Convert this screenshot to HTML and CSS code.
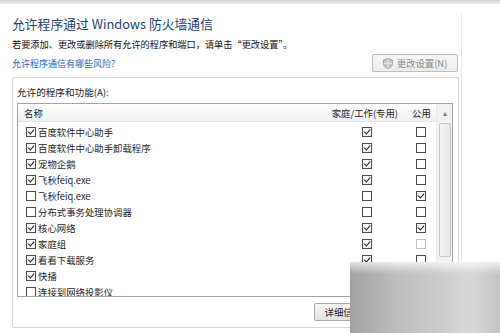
FILE: index.html
```html
<!DOCTYPE html>
<html lang="zh-CN">
<head>
    <meta charset="UTF-8">
    <title>允许程序通过 Windows 防火墙通信</title>
    <link rel="stylesheet" href="styles.css">
</head>
<body>
    <div class="topbar"></div>
    <div class="page">
        <h1 class="title">允许程序通过 Windows 防火墙通信</h1>
        <p class="desc">若要添加、更改或删除所有允许的程序和端口，请单击“更改设置”。</p>
        <div class="link-row">
            <a class="link" href="#">允许程序通信有哪些风险?</a>
            <button class="btn btn-change" disabled>
                <svg class="shield" width="10" height="11" viewBox="0 0 10 11">
                    <path d="M5 0.5 L9.5 2 V5.5 C9.5 8 7.5 9.8 5 10.5 C2.5 9.8 0.5 8 0.5 5.5 V2 Z" fill="#c4c4c4" stroke="#9a9a9a" stroke-width="0.8"/>
                    <path d="M5 0.9 V10.1 M0.9 5.2 H9.1" stroke="#ededed" stroke-width="1"/>
                </svg>
                更改设置(N)
            </button>
        </div>

        <!-- 允许的程序列表 -->
        <div class="group">
            <div class="group-label">允许的程序和功能(A):</div>
            <div class="list">
                <div class="list-body">
                    <div class="row head">
                        <span class="c-name">名称</span>
                        <span class="c-home">家庭/工作(专用)</span>
                        <span class="c-pub">公用</span>
                    </div>
                    <div class="row">
                        <span class="c-name"><i class="cb on"></i>百度软件中心助手</span>
                        <span class="c-home"><i class="cb on"></i></span>
                        <span class="c-pub"><i class="cb"></i></span>
                    </div>
                    <div class="row">
                        <span class="c-name"><i class="cb on"></i>百度软件中心助手卸载程序</span>
                        <span class="c-home"><i class="cb on"></i></span>
                        <span class="c-pub"><i class="cb"></i></span>
                    </div>
                    <div class="row">
                        <span class="c-name"><i class="cb on"></i>宠物企鹅</span>
                        <span class="c-home"><i class="cb on"></i></span>
                        <span class="c-pub"><i class="cb"></i></span>
                    </div>
                    <div class="row">
                        <span class="c-name"><i class="cb on"></i>飞秋feiq.exe</span>
                        <span class="c-home"><i class="cb on"></i></span>
                        <span class="c-pub"><i class="cb"></i></span>
                    </div>
                    <div class="row">
                        <span class="c-name"><i class="cb"></i>飞秋feiq.exe</span>
                        <span class="c-home"><i class="cb"></i></span>
                        <span class="c-pub"><i class="cb on"></i></span>
                    </div>
                    <div class="row">
                        <span class="c-name"><i class="cb"></i>分布式事务处理协调器</span>
                        <span class="c-home"><i class="cb"></i></span>
                        <span class="c-pub"><i class="cb"></i></span>
                    </div>
                    <div class="row">
                        <span class="c-name"><i class="cb on"></i>核心网络</span>
                        <span class="c-home"><i class="cb on"></i></span>
                        <span class="c-pub"><i class="cb on"></i></span>
                    </div>
                    <div class="row">
                        <span class="c-name"><i class="cb on"></i>家庭组</span>
                        <span class="c-home"><i class="cb on"></i></span>
                        <span class="c-pub"><i class="cb off"></i></span>
                    </div>
                    <div class="row">
                        <span class="c-name"><i class="cb on"></i>看看下载服务</span>
                        <span class="c-home"><i class="cb on"></i></span>
                        <span class="c-pub"><i class="cb"></i></span>
                    </div>
                    <div class="row">
                        <span class="c-name"><i class="cb on"></i>快播</span>
                        <span class="c-home"><i class="cb on"></i></span>
                        <span class="c-pub"><i class="cb on"></i></span>
                    </div>
                    <div class="row">
                        <span class="c-name"><i class="cb"></i>连接到网络投影仪</span>
                        <span class="c-home"><i class="cb"></i></span>
                        <span class="c-pub"><i class="cb"></i></span>
                    </div>
                </div>
                <div class="scrollbar">
                    <div class="sb-arrow">&#9652;</div>
                    <div class="sb-thumb"></div>
                </div>
            </div>
            <div class="group-foot">
                <button class="btn">详细信息(L)...</button>
                <button class="btn">删除(M)</button>
            </div>
        </div>
    </div>
    <div class="watermark"></div>
</body>
</html>
```

FILE: styles.css
```css
body {
    margin: 0;
    background: #ffffff;
    font-family: "Noto Sans CJK SC", "Liberation Sans", sans-serif;
    color: #222;
    overflow: hidden;
}
.topbar {
    height: 4px;
    background: linear-gradient(#d4d4d4, #ececec);
}
.page {
    width: 449px;
    height: 329px;
    padding-left: 12px;
    border-right: 1px solid #e6e6e6;
}
.title {
    margin: 10px 0 0;
    font-size: 12.8px;
    font-weight: normal;
    line-height: 20px;
    color: #243f72;
}
.desc {
    margin: 2px 0 0;
    font-size: 9.2px;
    line-height: 16px;
    color: #111;
}
.link-row {
    display: flex;
    justify-content: space-between;
    align-items: center;
    margin-top: 2px;
    height: 18px;
    padding-right: 3px;
}
.link {
    font-size: 9px;
    color: #1a66c8;
    text-decoration: none;
}
.btn {
    display: flex;
    align-items: center;
    justify-content: center;
    gap: 4px;
    height: 18px;
    padding: 0 8px;
    font-family: inherit;
    font-size: 9.4px;
    color: #222;
    background: linear-gradient(#f6f6f6, #e3e3e3);
    border: 1px solid #a9a9a9;
    border-radius: 2px;
}
.btn-change {
    width: 86px;
    color: #8a8a8a;
    border-color: #bdbdbd;
    background: linear-gradient(#f7f7f7, #ececec);
}
.group {
    margin-top: 5px;
    width: 436px;
    border: 1px solid #d3d8dc;
    border-radius: 2px;
    padding: 0 5px 6px 4px;
}
.group-label {
    margin-top: 8px;
    font-size: 9.6px;
    line-height: 12px;
    color: #222;
}
.list {
    display: flex;
    margin-top: 5px;
    height: 192px;
    border: 1px solid #9ea3a9;
    overflow: hidden;
}
.list-body {
    flex: 1;
    overflow: hidden;
}
.row {
    display: flex;
    align-items: center;
    height: 16px;
    font-size: 9.4px;
    line-height: 16px;
    white-space: nowrap;
    color: #1e1e1e;
}
.row.head {
    height: 18px;
    margin-bottom: 2px;
    background: linear-gradient(#ffffff, #eef0f2);
    border-bottom: 1px solid #e2e4e6;
    box-sizing: border-box;
}
.c-name {
    display: flex;
    align-items: center;
    flex: 1;
    padding-left: 8px;
}
.head .c-name {
    padding-left: 6px;
}
/* checkbox columns */
.c-home {
    display: flex;
    justify-content: center;
    width: 20px;
    margin-right: 34px;
}
.c-pub {
    display: flex;
    justify-content: center;
    width: 20px;
    margin-right: 5px;
}
.head .c-home {
    width: auto;
    margin-right: 14px;
}
.head .c-pub {
    justify-content: flex-start;
    width: 20px;
    margin-right: 4px;
}
.cb {
    position: relative;
    display: inline-block;
    width: 8px;
    height: 8px;
    border: 1px solid #4a4a4a;
    background: #fff;
    margin-right: 2px;
    flex: none;
}
.c-home .cb, .c-pub .cb {
    margin-right: 0;
}
.cb.on::after {
    content: "";
    position: absolute;
    left: 2px;
    top: 0px;
    width: 3px;
    height: 5px;
    border: solid #1a1a1a;
    border-width: 0 1.6px 1.6px 0;
    transform: rotate(40deg);
}
.cb.off {
    border-color: #c2c2c2;
}
.scrollbar {
    width: 15px;
    background: #f2f2f2;
    border-left: 1px solid #e8e8e8;
    display: flex;
    flex-direction: column;
    align-items: center;
}
.sb-arrow {
    height: 17px;
    font-size: 8px;
    line-height: 17px;
    color: #777;
}
.sb-thumb {
    margin-top: 2px;
    width: 12px;
    height: 134px;
    background: linear-gradient(90deg, #f4f4f4, #e6e6e6);
    border: 1px solid #c6c6c6;
    border-radius: 2px;
    box-sizing: border-box;
}
.group-foot {
    display: flex;
    justify-content: flex-end;
    gap: 6px;
    margin-top: 6px;
}
.group-foot .btn {
    height: 18px;
    padding: 0 10px;
}
.watermark {
    position: absolute;
    left: 350px;
    top: 262px;
    width: 150px;
    height: 71px;
    background:
        linear-gradient(rgba(255,255,255,0.7), rgba(255,255,255,0) 12px),
        linear-gradient(90deg, #a2a2a2, #bdbdbd 30%, #c9c9c9 55%, #d8d8d8 80%, #c4c4c4);
}
```
